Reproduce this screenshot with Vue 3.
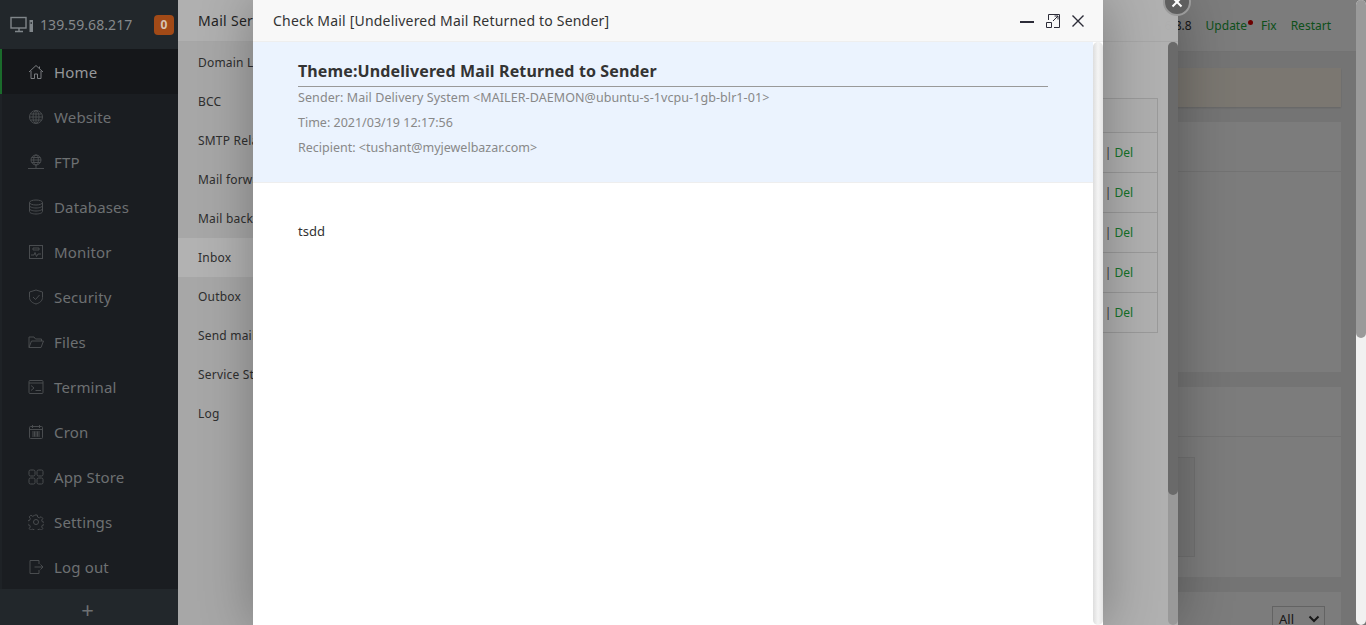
<script setup>
const nav = [
  { label: 'Home', icon: 'home', active: true },
  { label: 'Website', icon: 'globe' },
  { label: 'FTP', icon: 'ftp' },
  { label: 'Databases', icon: 'db' },
  { label: 'Monitor', icon: 'monitor' },
  { label: 'Security', icon: 'shield' },
  { label: 'Files', icon: 'folder' },
  { label: 'Terminal', icon: 'terminal' },
  { label: 'Cron', icon: 'cron' },
  { label: 'App Store', icon: 'apps' },
  { label: 'Settings', icon: 'gear' },
  { label: 'Log out', icon: 'logout' }
]
const menu = ['Domain List', 'BCC', 'SMTP Relay', 'Mail forward', 'Mail backup', 'Inbox', 'Outbox', 'Send mail', 'Service Status', 'Log']
const rows = [1, 2, 3, 4, 5]
</script>

<template>
  <div class="app">
    <aside class="sidebar">
      <div class="side-head">
        <svg class="pc" width="26" height="18" viewBox="0 0 26 18" fill="none" stroke="#80868a" stroke-width="1.4">
          <rect x="1" y="1.5" width="15" height="10.5" />
          <path d="M5 15.5h8M9 12v3" />
          <rect x="19.5" y="4" width="3.5" height="12" fill="#80868a" stroke="none" />
          <path d="M20.5 7h1.5" stroke="#22272b" />
        </svg>
        <span class="ip">139.59.68.217</span>
        <span class="badge">0</span>
      </div>
      <nav class="nav">
        <a v-for="n in nav" :key="n.label" class="nav-item" :class="{ active: n.active }">
          <svg class="ico" width="16" height="16" viewBox="0 0 16 16" fill="none" :stroke="n.active ? '#7a7d80' : '#494c4f'" stroke-width="1">
            <template v-if="n.icon === 'home'">
              <path d="M1 8l7-6.5L15 8M3 7v7.5h3.5V10h3v4.500H13V7M11.500 2.500v2" />
            </template>
            <template v-else-if="n.icon === 'globe'">
              <circle cx="8" cy="8" r="6.5" />
              <ellipse cx="8" cy="8" rx="3" ry="6.5" />
              <path d="M1.500 8h13M2.500 5h11M2.500 11h11M8 1.500v13" />
            </template>
            <template v-else-if="n.icon === 'ftp'">
              <circle cx="8" cy="6" r="5" />
              <ellipse cx="8" cy="6" rx="2.300" ry="5" />
              <path d="M3 6h10M3.800 3.500h8.400M3.800 8.500h8.400M8 11v3M0 14.500h16" />
            </template>
            <template v-else-if="n.icon === 'db'">
              <ellipse cx="8" cy="3.500" rx="6.500" ry="2.500" />
              <path d="M1.500 3.500v9c0 1.400 2.900 2.500 6.500 2.500s6.500-1.100 6.500-2.500v-9M1.500 6.500c0 1.400 2.900 2.500 6.500 2.500s6.500-1.100 6.500-2.500M1.500 9.500c0 1.400 2.900 2.500 6.500 2.500s6.500-1.100 6.500-2.500" />
            </template>
            <template v-else-if="n.icon === 'monitor'">
              <rect x="1.500" y="1.500" width="13" height="13" />
              <path d="M3 11h3l1-2.500 1.500 4L10 10h3M5 4h6v2H5z" />
            </template>
            <template v-else-if="n.icon === 'shield'">
              <path d="M8 1l6.500 2v5.500c0 3.500-3 5.500-6.500 6.500-3.500-1-6.500-3-6.500-6.500V3zM5 8l2.500 2.500L11.500 6" />
            </template>
            <template v-else-if="n.icon === 'folder'">
              <path d="M1 13.500V3h5l1.500 2h6v2M1 13.500h12L15.500 7H3.500z" />
            </template>
            <template v-else-if="n.icon === 'terminal'">
              <rect x="1" y="1.500" width="14" height="13" rx="1" />
              <path d="M1 4h14M3 6.500L6 9l-3 2.500M7.500 11.500H13" />
            </template>
            <template v-else-if="n.icon === 'cron'">
              <rect x="1.500" y="2.500" width="13" height="12" rx="1" />
              <path d="M4.500 1v3M11.500 1v3M1.500 5.500h13M4 8h8M4 10h8M4 12h8M6.500 7.500v5M9.500 7.500v5" />
            </template>
            <template v-else-if="n.icon === 'apps'">
              <rect x="1" y="1" width="6" height="6" rx="1.500" />
              <rect x="9" y="1" width="6" height="6" rx="1.500" />
              <rect x="1" y="9" width="6" height="6" rx="1.500" />
              <rect x="9" y="9" width="6" height="6" rx="1.500" />
            </template>
            <template v-else-if="n.icon === 'gear'">
              <circle cx="8" cy="8" r="2.500" />
              <path d="M6.800 1h2.400l.4 2 1.800.8 1.700-1.100 1.700 1.700-1.100 1.700.7 1.800 2 .4v2.400l-2 .4-.7 1.800 1.100 1.700-1.700 1.700-1.700-1.100-1.800.7-.4 2H6.800l-.4-2-1.800-.7-1.700 1.100-1.700-1.700 1.100-1.700-.7-1.800-2-.4V6.800l2-.4.7-1.800-1.100-1.700 1.700-1.700 1.700 1.100 1.800-.8z" />
            </template>
            <template v-else>
              <path d="M11 5V1.500H2v13h9V11M6.500 8H15M12.500 5.500L15 8l-2.500 2.500" />
            </template>
          </svg>
          <span>{{ n.label }}</span>
        </a>
      </nav>
      <div class="side-foot">+</div>
    </aside>

    <main class="page">
      <header class="page-head">
        <span class="ver">6.8.8</span>
        <a class="lnk up">Update<i class="dot"></i></a>
        <a class="lnk">Fix</a>
        <a class="lnk">Restart</a>
      </header>
      <section class="alert"><span class="ghost">⚠ The</span></section>
      <section class="card c1">
        <h3 class="card-h"><span class="ghost big">Status</span></h3>
      </section>
      <section class="card c2">
        <h3 class="card-h"><span class="ghost big">Overview</span></h3>
        <div class="c2-body"><div class="inner"></div></div>
      </section>
      <section class="card c3">
        <h3 class="card-h c3-h">
          <span class="ghost big">Software</span>
          <span class="sel">All
            <svg width="12" height="8" viewBox="0 0 12 8" fill="none" stroke="#333" stroke-width="2"><path d="M1.500 1.500L6 6l4.500-4.500" /></svg>
          </span>
        </h3>
      </section>
    </main>

    <div class="shade"></div>

    <section class="panel">
      <header class="panel-head">Mail Server</header>
      <div class="panel-body">
        <ul class="menu">
          <li v-for="m in menu" :key="m" :class="{ on: m === 'Inbox' }">{{ m }}</li>
        </ul>
        <div class="panel-content">
          <table class="tbl">
            <thead><tr><th></th><th></th></tr></thead>
            <tbody>
              <tr v-for="r in rows" :key="r">
                <td></td>
                <td class="op"><span class="sep">|</span> <a>Del</a></td>
              </tr>
            </tbody>
          </table>
        </div>
      </div>
      <div class="bar"><div class="thumb"></div></div>
    </section>

    <div class="shade"></div>

    <section class="modal">
      <header class="modal-head">
        <span>Check Mail [Undelivered Mail Returned to Sender]</span>
        <div class="win">
          <svg width="16" height="16" viewBox="0 0 16 16" fill="none" stroke="#2c2c38" stroke-width="2"><path d="M1 9h14" /></svg>
          <svg width="16" height="16" viewBox="0 0 16 16" fill="none" stroke="#2c2c38" stroke-width="1"><path d="M3.500 7V1.500h11v13H9M1.500 9.500h5v5h-5zM8 8l5-5M9.500 3H13v3.500" /></svg>
          <svg width="16" height="16" viewBox="0 0 16 16" fill="none" stroke="#2c2c38" stroke-width="1.400"><path d="M1.500 2.500l11 11M12.500 2.500l-11 11" /></svg>
        </div>
      </header>
      <div class="modal-scroll">
        <div class="mail-meta">
          <h2>Theme:Undelivered Mail Returned to Sender</h2>
          <p class="sender">Sender: Mail Delivery System &lt;MAILER-DAEMON@ubuntu-s-1vcpu-1gb-blr1-01&gt;</p>
          <p>Time: 2021/03/19 12:17:56</p>
          <p>Recipient: &lt;tushant@myjewelbazar.com&gt;</p>
        </div>
        <div class="mail-body">tsdd</div>
        <div class="m-bar"></div>
      </div>
    </section>

    <button class="close2" aria-label="close">
      <svg width="12" height="12" viewBox="0 0 12 12" fill="none" stroke="#fff" stroke-width="2"><path d="M1.500 1.500l9 9M10.500 1.500l-9 9" /></svg>
    </button>

    <div class="page-bar"><div class="page-thumb"></div></div>
  </div>
</template>

<style>
html, body { margin: 0; padding: 0; overflow: hidden; }
</style>

<style scoped>
.app {
  position: relative;
  display: flex;
  width: 1366px;
  height: 625px;
  overflow: hidden;
  font-family: "Noto Sans", "Open Sans", sans-serif;
  color: #333;
  background: #f0f0f0;
}

/* Sidebar */
.sidebar {
  position: relative;
  z-index: 2;
  flex: 0 0 178px;
  display: flex;
  flex-direction: column;
  background: #1a1d21;
}
.side-head {
  height: 50px;
  display: flex;
  align-items: center;
  padding-left: 10px;
  background: #22272b;
  box-sizing: border-box;
}
.pc { margin-right: 4px; }
.ip { font-size: 14px; letter-spacing: .08px; color: #85898c; }
.badge {
  margin-left: auto;
  margin-right: 4px;
  width: 20px;
  height: 20px;
  line-height: 20px;
  text-align: center;
  border-radius: 4px;
  background: #a24a17;
  color: #d6c4b4;
  font-size: 12px;
  font-weight: 700;
}
.nav { flex: 1; }
.nav-item {
  display: flex;
  align-items: center;
  height: 45px;
  padding-left: 26px;
  gap: 10px;
  font-size: 15px;
  letter-spacing: .15px;
  color: #6d7072;
  border-left: 2px solid #1e2226;
}
.nav-item.active {
  background: #15171a;
  color: #96989a;
  border-left-color: #1a6b2b;
}
.ico { flex: none; }
.side-foot {
  height: 36px;
  line-height: 40px;
  padding-right: 3px;
  text-align: center;
  background: #22272b;
  color: #6d7072;
  font-size: 22px;
}

/* Page behind */
.page {
  flex: 1;
  padding-right: 25px;
  min-width: 0;
}
.page-head {
  height: 52px;
  box-sizing: border-box;
  background: #fff;
  border-bottom: 1px solid #ececec;
  margin-right: -25px;
  padding-right: 35px;
  display: flex;
  justify-content: flex-end;
  align-items: center;
  gap: 14px;
  font-size: 12px;
}
.ver { color: #333; }
.lnk { color: #20a53a; position: relative; }
.dot {
  position: absolute;
  right: -6px;
  top: 3px;
  width: 5px;
  height: 5px;
  border-radius: 50%;
  background: #e00000;
}
.alert {
  margin: 16px 0 15px 15px;
  height: 39px;
  background: #fdf5e8;
  display: flex;
  align-items: center;
  padding-left: 12px;
  font-size: 14px;
  box-shadow: 0 1px 2px rgba(0, 0, 0, .15);
}
.card {
  margin: 0 0 15px 15px;
  background: #fff;
}
.c1 { height: 250px; }
.c2 { height: 190px; }
.c3 { height: 100px; }
.card-h {
  margin: 0;
  height: 50px;
  box-sizing: border-box;
  border-bottom: 1px solid #ececec;
  font-weight: 400;
  font-size: 16px;
  line-height: 49px;
  padding-left: 17px;
}
.c2-body { padding: 20px 0 0 0; }
.inner {
  width: 1002px;
  height: 100px;
  box-sizing: border-box;
  background: #f7f7f7;
  border: 1px solid #e8e8e8;
}
.c3-h { position: relative; border: 0; }
.sel {
  position: absolute;
  right: 16px;
  top: 14px;
  width: 53px;
  height: 26px;
  box-sizing: border-box;
  border: 1px solid #ccc;
  padding: 0 4px 0 6px;
  display: flex;
  align-items: center;
  justify-content: space-between;
  line-height: 24px;
  font-size: 13px;
}
.ghost { color: #666; }
.big { font-size: 16px; }

/* Shades */
.shade {
  position: absolute;
  inset: 0 0 0 178px;
  background: rgba(0, 0, 0, .3);
}

/* Panel */
.panel {
  position: absolute;
  left: 178px;
  top: 0;
  bottom: 0;
  width: 1000px;
  display: flex;
  flex-direction: column;
  background: rgba(255, 255, 255, .975);
  box-shadow: 1px 1px 50px rgba(0, 0, 0, .3);
}
.panel-head {
  height: 42px;
  flex: none;
  box-sizing: border-box;
  line-height: 41px;
  padding-left: 20px;
  font-size: 14px;
  letter-spacing: .3px;
  color: #333;
  border-bottom: 1px solid #eee;
}
.panel-body { flex: 1; display: flex; min-height: 0; }
.menu {
  flex: 0 0 150px;
  list-style: none;
  margin: 0;
  padding: 1px 0 0;
  background: #f0f0f0;
  align-self: stretch;
}
.menu li {
  height: 39px;
  line-height: 39px;
  padding-left: 20px;
  font-size: 12px;
  letter-spacing: .2px;
  color: #444;
  white-space: nowrap;
}
.menu li.on { background: #fff; }
.panel-content {
  flex: 1;
  padding: 56px 20px 0 20px;
}
.tbl {
  width: 100%;
  border-collapse: collapse;
  font-size: 12px;
}
.tbl th, .tbl td { border: 1px solid #ddd; padding: 0; }
.tbl thead tr { height: 34px; background: #fafafa; }
.tbl tbody tr { height: 40px; }
.op { width: 55px; box-sizing: border-box; text-align: right; padding-right: 24px !important; }
.sep { color: #555; }
.op a { color: #20a53a; }
.bar {
  position: absolute;
  right: 0;
  top: 42px;
  bottom: 0;
  width: 10px;
  border-radius: 5px;
  background: #dcdcdc;
}
.thumb {
  height: 453px;
  border-radius: 5px;
  background: #989898;
}

/* Modal */
.modal {
  position: absolute;
  left: 253px;
  top: 0;
  bottom: 0;
  width: 850px;
  display: flex;
  flex-direction: column;
  background: #fff;
  box-shadow: 1px 1px 50px rgba(0, 0, 0, .3);
}
.modal-head {
  height: 42px;
  flex: none;
  box-sizing: border-box;
  display: flex;
  align-items: center;
  justify-content: space-between;
  padding: 0 16px 0 20px;
  background: #f8f8f8;
  border-bottom: 1px solid #eee;
  font-size: 14px;
  letter-spacing: .19px;
  color: #333;
}
.win { display: flex; gap: 10px; align-items: center; }
.modal-scroll { position: relative; flex: 1; padding-right: 10px; }
.mail-meta {
  height: 141px;
  box-sizing: border-box;
  padding: 18px 45px 0;
  background: #ebf3fe;
  border-bottom: 1px solid #eee;
}
.mail-meta h2 {
  margin: 0 0 -2px;
  height: 27px;
  line-height: 23px;
  font-size: 16px;
  font-weight: 700;
  letter-spacing: .12px;
  color: #333;
  border-bottom: 1px solid #999;
  box-sizing: border-box;
}
.mail-meta p {
  margin: 0;
  height: 25px;
  line-height: 25px;
  font-size: 12.5px;
  color: #888;
}
.mail-meta p.sender { letter-spacing: .08px; }
.mail-body {
  padding: 38px 45px;
  font-size: 13px;
  line-height: 20px;
  color: #333;
}
.m-bar {
  position: absolute;
  right: 0;
  top: 0;
  bottom: 0;
  width: 10px;
  border-radius: 5px;
  background: linear-gradient(90deg, #ddd, #f4f4f4 50%, #e4e4e4);
}

/* Close circle */
.close2 {
  position: absolute;
  left: 1163px;
  top: -12px;
  width: 28px;
  height: 28px;
  box-sizing: border-box;
  padding: 0;
  border-radius: 50%;
  border: 2px solid #9a9a9a;
  background: #5f5f5f;
  display: flex;
  align-items: center;
  justify-content: center;
}

/* Page scrollbar */
.page-bar {
  position: absolute;
  right: 0;
  top: 0;
  bottom: 0;
  width: 10px;
  background: #f1f1f1;
  border-radius: 5px;
}
.page-thumb {
  height: 338px;
  background: #9a9a9a;
  border-radius: 5px;
}
</style>
